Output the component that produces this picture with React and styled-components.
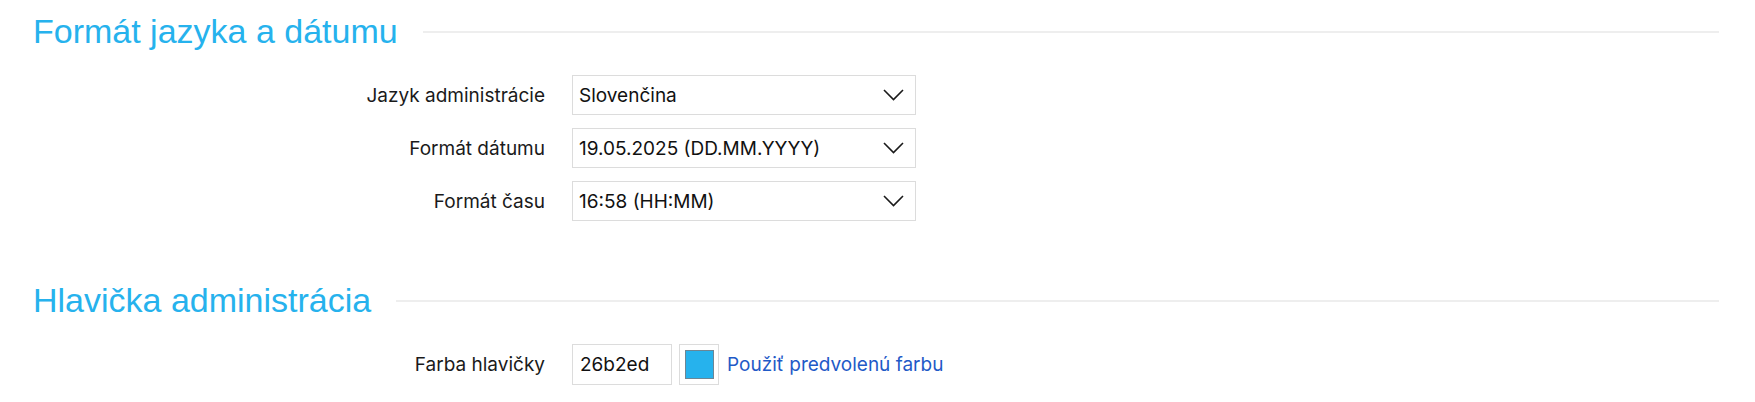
import React from 'react';
import styled, { createGlobalStyle } from 'styled-components';

const GlobalStyle = createGlobalStyle`
  html, body {
    margin: 0;
    padding: 0;
    background: #ffffff;
  }
  body {
    font-family: Inter, "Noto Sans", sans-serif;
    color: #1a1a1a;
  }
`;

const Page = styled.div`
  padding: 11px 36px 0 33px;
`;

const Section = styled.section`
  margin-bottom: ${(p) => p.$spaceAfter || 0}px;
`;

const SectionTitle = styled.div`
  display: flex;
  align-items: center;
  gap: 25px;
  h2 {
    margin: 0;
    font-family: "Liberation Sans", Arial, sans-serif;
    font-weight: normal;
    font-size: 34px;
    line-height: 40px;
    color: #26b2ed;
    white-space: nowrap;
  }
`;

const Rule = styled.div`
  flex: 1;
  height: 2px;
  background: #eeeeee;
  margin-top: 2px;
`;

const Form = styled.div`
  display: flex;
  flex-direction: column;
  gap: 13px;
  margin-top: 24px;
`;

const Row = styled.div`
  display: grid;
  grid-template-columns: 512px auto;
  column-gap: 27px;
  align-items: center;
`;

const Label = styled.label`
  text-align: right;
  font-size: 19px;
  color: #1a1a1a;
`;

const SelectBox = styled.div`
  box-sizing: border-box;
  width: 344px;
  height: 40px;
  border: 1px solid #dcdcdc;
  background: #fff;
  display: flex;
  align-items: center;
  justify-content: space-between;
  padding: 0 11px 0 6px;
  font-size: 19px;
  color: #111;
  svg {
    display: block;
  }
`;

const ColorRow = styled.div`
  display: flex;
  align-items: center;
  gap: 7px;
`;

const HexInput = styled.div`
  box-sizing: border-box;
  width: 100px;
  height: 41px;
  border: 1px solid #dcdcdc;
  display: flex;
  align-items: center;
  padding-left: 7px;
  font-size: 19px;
  color: #111;
`;

const SwatchFrame = styled.div`
  box-sizing: border-box;
  width: 40px;
  height: 41px;
  border: 1px solid #dcdcdc;
  display: flex;
  align-items: center;
  justify-content: center;
`;

const Swatch = styled.div`
  box-sizing: border-box;
  width: 29px;
  height: 29px;
  background: ${(p) => p.$color};
  border: 1px solid #6c8695;
`;

const ResetLink = styled.a`
  margin-left: 1px;
  font-size: 19px;
  color: #1f5ac7;
  text-decoration: none;
  cursor: pointer;
`;

const Chevron = () => (
  <svg width="21" height="12" viewBox="0 0 21 12" fill="none">
    <path d="M1 1 L10.5 10.5 L20 1" stroke="#1a1a1a" strokeWidth="1.6" />
  </svg>
);

function Select({ value }) {
  return (
    <SelectBox>
      <span>{value}</span>
      <Chevron />
    </SelectBox>
  );
}

const selects = [
  { label: 'Jazyk administrácie', value: 'Slovenčina' },
  { label: 'Formát dátumu', value: '19.05.2025 (DD.MM.YYYY)' },
  { label: 'Formát času', value: '16:58 (HH:MM)' },
];

export default function App() {
  return (
    <>
      <GlobalStyle />
      <Page>
        <Section $spaceAfter={59}>
          <SectionTitle>
            <h2>Formát jazyka a dátumu</h2>
            <Rule />
          </SectionTitle>
          <Form>
            {selects.map((s) => (
              <Row key={s.label}>
                <Label>{s.label}</Label>
                <Select value={s.value} />
              </Row>
            ))}
          </Form>
        </Section>
        <Section>
          <SectionTitle>
            <h2>Hlavička administrácia</h2>
            <Rule />
          </SectionTitle>
          <Form>
            <Row>
              <Label>Farba hlavičky</Label>
              <ColorRow>
                <HexInput>26b2ed</HexInput>
                <SwatchFrame>
                  <Swatch $color="#26b2ed" />
                </SwatchFrame>
                <ResetLink>Použiť predvolenú farbu</ResetLink>
              </ColorRow>
            </Row>
          </Form>
        </Section>
      </Page>
    </>
  );
}
